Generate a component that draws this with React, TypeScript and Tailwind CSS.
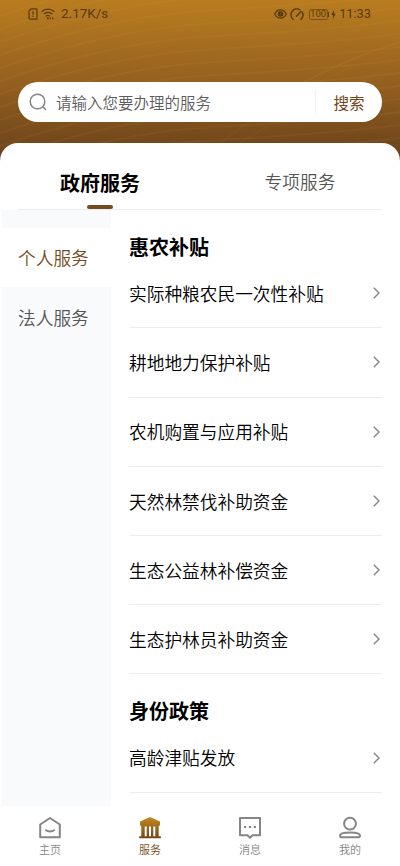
import { Fragment } from "react";
import clsx from "clsx";

const groups = [
  {
    title: "惠农补贴",
    items: [
      "实际种粮农民一次性补贴",
      "耕地地力保护补贴",
      "农机购置与应用补贴",
      "天然林禁伐补助资金",
      "生态公益林补偿资金",
      "生态护林员补助资金",
    ],
  },
  { title: "身份政策", items: ["高龄津贴发放"] },
];

const waves = Array.from({ length: 15 }, (_, i) => i * 13 - 20);

function HeaderWaves() {
  return (
    <svg className="absolute inset-0" width="400" height="164" viewBox="0 0 400 164" fill="none">
      <g stroke="#e0a03a" strokeOpacity="0.08" strokeWidth="2">
        {waves.map((y) => (
          <path key={y} d={`M0 ${y + 36}C70 ${y + 12} 140 ${y - 4} 200 ${y - 8}S320 ${y - 14} 400 ${y - 24}`} />
        ))}
      </g>
      <g stroke="#e0a03a" strokeOpacity="0.12" strokeWidth="1.5">
        <path d="M300 84C330 68 365 53 400 42" />
        <path d="M220 143C270 105 330 70 400 52" strokeOpacity="0.06" />
        <path d="M240 143C290 112 340 84 400 66" strokeOpacity="0.06" />
      </g>
    </svg>
  );
}

function StatusBar() {
  return (
    <div className="relative flex h-7 items-center pl-[28px] pr-[29px] text-[#583a10]">
      <svg className="h-3 w-2.5" viewBox="0 0 10 12" fill="none" stroke="currentColor" strokeWidth="1.2">
        <path d="M3.2.8H8a1 1 0 0 1 1 1v8.4a1 1 0 0 1-1 1H2a1 1 0 0 1-1-1V3z" />
        <path d="M5 3.3v3.4M5 7.8V9" />
      </svg>
      <svg className="ml-[3px] h-3 w-[14px]" viewBox="0 0 14 12" fill="none" stroke="currentColor" strokeWidth="1.2">
        <path d="M.7 3.7c3.6-3.4 9-3.4 12.6 0M2.8 6c2.4-2.3 6-2.3 8.4 0M4.8 8.2c1.2-1.1 2.8-1.1 4 0" />
        <path d="M6 10.4h1.6M8.7 10.4h1.2M11 10.4h1.4" strokeWidth="1.6" />
      </svg>
      <span className="ml-[6px] font-[Roboto] text-[13.5px] leading-none">2.17K/s</span>
      <svg className="ml-auto h-[10px] w-[13px]" viewBox="0 0 13 10" fill="none" stroke="currentColor" strokeWidth="1.2">
        <path d="M.7 5C3.3-.5 9.7-.5 12.3 5 9.7 10.5 3.3 10.5.7 5z" />
        <circle cx="6.5" cy="5" r="1.7" strokeWidth="2.2" />
      </svg>
      <svg className="ml-[3px] h-[13px] w-[14px]" viewBox="0 0 14 13" fill="none" stroke="currentColor" strokeWidth="1.5" strokeLinecap="round">
        <path d="M3 11.2A5.9 5.9 0 0 1 9.7 1.6M12.2 4.2A5.9 5.9 0 0 1 11 11.2M6.5 8.2 10.8 3.5" />
      </svg>
      <span className="ml-[5px] flex h-[11px] w-[19px] items-center justify-center rounded-[2px] border border-[#583a10]/60 font-[Roboto] text-[9.5px] leading-none">
        100
      </span>
      <span className="h-[5px] w-[1.5px] bg-current" />
      <svg className="ml-[2px] h-[9px] w-[5px]" viewBox="0 0 5 9" fill="currentColor">
        <path d="M3.2 0 .2 5h2L1.7 9 4.8 3.8h-2z" />
      </svg>
      <span className="ml-[3px] font-[Roboto] text-[12.8px] leading-none">11:33</span>
    </div>
  );
}

function HomeIcon() {
  return (
    <svg className="h-6 w-6" viewBox="0 0 24 24" fill="none" stroke="#858585" strokeWidth="2">
      <path d="M2.2 8.5 12 2 21.8 8.5v12.8H2.2z" strokeLinejoin="round" />
      <path d="M8 14.2c2 1.6 6 1.6 8 0" strokeLinecap="round" />
    </svg>
  );
}

function ServiceIcon() {
  return (
    <svg className="h-6 w-6" viewBox="0 0 24 24" fill="url(#bronze)">
      <defs>
        <linearGradient id="bronze" gradientUnits="userSpaceOnUse" x1="12" y1="1" x2="12" y2="22">
          <stop stopColor="#c58a20" />
          <stop offset="1" stopColor="#75461a" />
        </linearGradient>
      </defs>
      <path
        d="M12 1 22 5.5V8.5Q22 10 20.7 10V20.3H22.8V22.3H1.2V20.3H3.3V10Q2 10 2 8.5V5.5zM6.7 10.5v9.8h2v-9.8zM11 10.5v9.8h2v-9.8zM15.3 10.5v9.8h2v-9.8z"
        fillRule="evenodd"
      />
    </svg>
  );
}

function MessageIcon() {
  return (
    <svg className="h-6 w-6" viewBox="0 0 24 24" fill="none" stroke="#858585" strokeWidth="2">
      <path d="M2 2h20v17.2h-7.5L12 21.7l-2.5-2.5H2z" strokeLinejoin="round" />
      <path d="M6 11h2.2M10.9 11h2.2M15.8 11H18" strokeWidth="2.2" />
    </svg>
  );
}

function UserIcon() {
  return (
    <svg className="h-6 w-6" viewBox="0 0 24 24" fill="none" stroke="#858585" strokeWidth="2">
      <circle cx="12" cy="7.7" r="5.9" />
      <path d="M2 19.4c0-2 4.6-3 10-3s10 1 10 3c0 1.3-.8 1.9-2.2 1.9H4.2C2.8 21.3 2 20.7 2 19.4z" />
    </svg>
  );
}

const navItems = [
  { label: "主页", icon: HomeIcon },
  { label: "服务", icon: ServiceIcon, active: true },
  { label: "消息", icon: MessageIcon },
  { label: "我的", icon: UserIcon },
];

export default function App() {
  return (
    <div className="flex h-[866px] w-[400px] flex-col overflow-hidden bg-white font-['Noto_Sans_CJK_SC',sans-serif]">
      <header className="relative h-[164px] shrink-0 bg-linear-to-b from-[#b97d1f] via-[#946020] via-50% to-[#67401a]">
        <HeaderWaves />
        <StatusBar />
        <div className="relative mx-[18px] mt-[54px] flex h-10 items-center rounded-full bg-white pl-[11px]">
          <svg className="h-[18px] w-[18px]" viewBox="0 0 18 18" fill="none" stroke="#858585" strokeWidth="1.5" strokeLinecap="round">
            <circle cx="8.5" cy="8.5" r="7.3" />
            <path d="m13.8 13.8 2.7 2.7" />
          </svg>
          <span className="ml-[9px] pt-px text-[15.5px] font-[350] leading-none text-[#5c5c5c]">请输入您要办理的服务</span>
          <span className="ml-auto h-[23px] w-px bg-[#eeeeee]" />
          <button className="w-[66px] pt-px text-[15.5px] leading-none text-[#70471b]">搜索</button>
        </div>
      </header>

      <main className="relative -mt-[21px] flex min-h-0 flex-1 flex-col rounded-t-[18px] bg-white">
        <div className="mx-[18px] flex h-[67px] shrink-0 border-b border-[#ececec]">
          <div className="relative flex w-1/2 justify-center pr-[18px] pt-[25px]">
            <span className="text-[20px] font-bold leading-[30px] text-black">政府服务</span>
            <span className="absolute bottom-0 left-[69px] h-1 w-[26px] rounded-[2px] bg-[#754b20]" />
          </div>
          <div className="flex w-1/2 justify-center pl-[18px] pt-[24px]">
            <span className="text-[17.7px] font-[350] leading-[28px] text-[#555555]">专项服务</span>
          </div>
        </div>

        <div className="flex min-h-0 flex-1">
          <aside className="ml-[2px] w-[109px] shrink-0 bg-[#f8fafc] pt-[18px] text-[17.7px] font-[350]">
            <div className="flex h-[59px] items-center bg-white pl-4 text-[#754b20]">个人服务</div>
            <div className="flex h-[60px] items-center pl-4 pt-px text-[#555555]">法人服务</div>
          </aside>
          <section className="min-w-0 flex-1 overflow-hidden px-[18px]">
            {groups.map((group) => (
              <Fragment key={group.title}>
                <h2 className="h-[49.2px] pt-[22px] text-[20px] font-bold leading-[30px] text-black">{group.title}</h2>
                {group.items.map((item) => (
                  <div key={item} className="flex h-[69.2px] items-center justify-between border-b border-[#ececec] text-[17.7px] font-[350] text-black">
                    <span>{item}</span>
                    <svg className="mr-[2px] h-3 w-[7px]" viewBox="0 0 7 12" fill="none" stroke="#8a8a8a" strokeWidth="1.5">
                      <path d="m.8.8 5.2 5.2-5.2 5.2" />
                    </svg>
                  </div>
                ))}
              </Fragment>
            ))}
          </section>
        </div>
      </main>

      <nav className="grid h-[60px] shrink-0 grid-cols-4 bg-white pt-[10px]">
        {navItems.map(({ label, icon: Icon, active }) => (
          <div
            key={label}
            className={clsx("flex flex-col items-center text-[11px] font-[350] leading-4", active ? "text-[#754b20]" : "text-[#858585]")}
          >
            <Icon />
            <span className="mt-px">{label}</span>
          </div>
        ))}
      </nav>
    </div>
  );
}
